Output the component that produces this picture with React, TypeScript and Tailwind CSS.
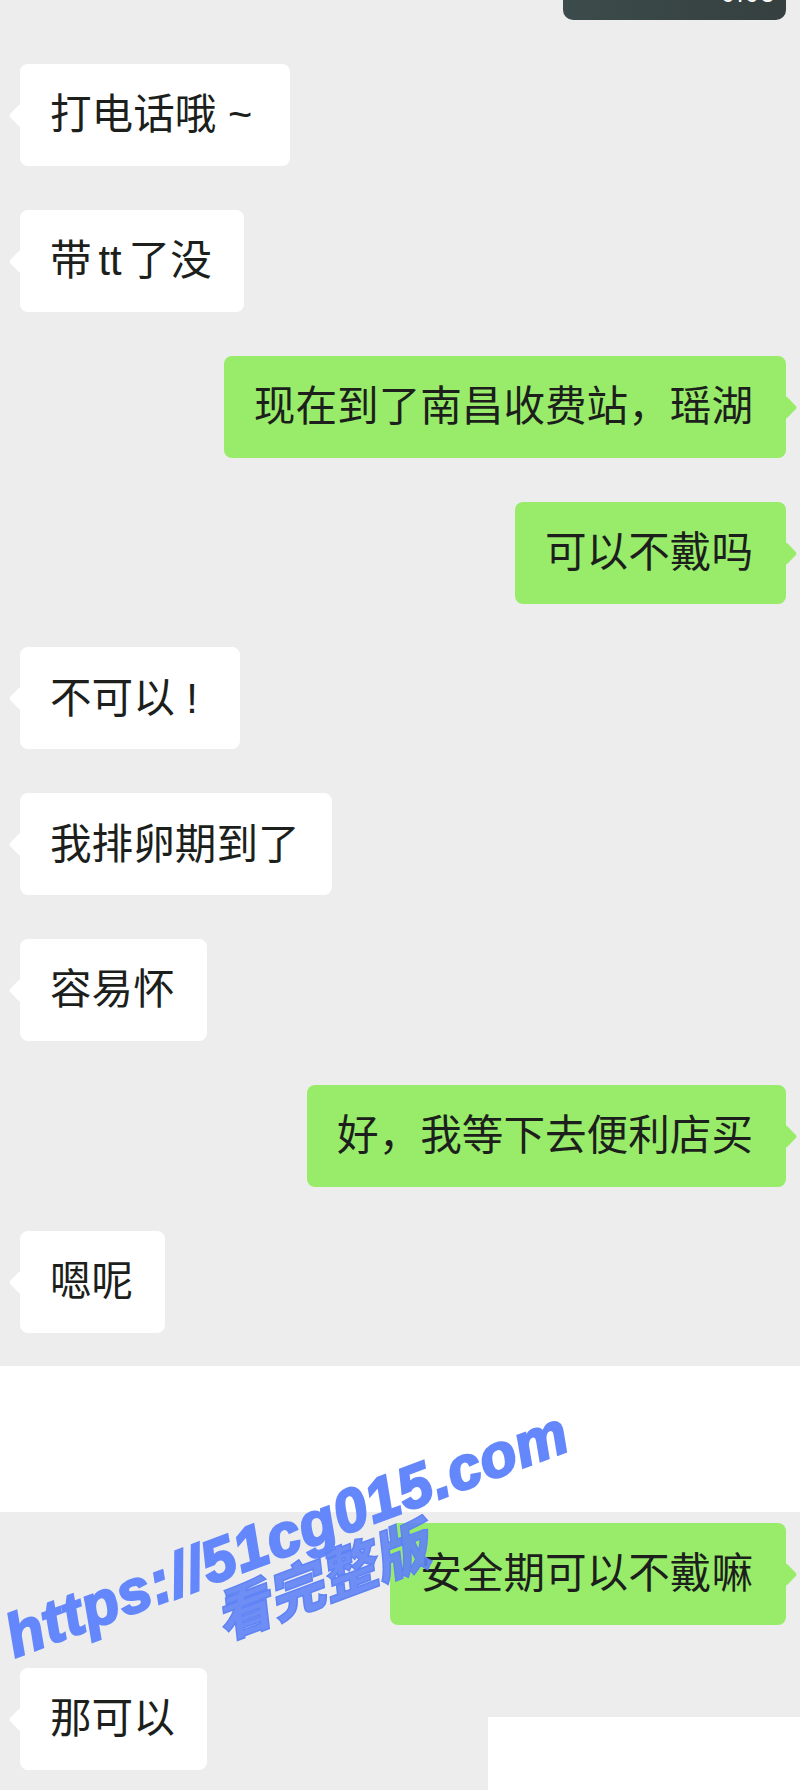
import React from "react";

const fontStack = "font-['Liberation_Sans','Noto_Sans_CJK_SC',sans-serif]";

type BubbleProp = {
  text: string;
  mine?: boolean;
  widthClass?: string;
};

const Bubble = ({ text, mine, widthClass = "" }: BubbleProp) => {
  return (
    <div className={mine ? "flex justify-end pr-[14px]" : "flex justify-start pl-[20px]"}>
      <div
        className={
          mine
            ? `relative flex h-[102px] items-center rounded-lg bg-[#98ec6a] pl-[30px] pr-[33px] ${widthClass}`
            : `relative flex h-[102px] items-center rounded-lg bg-white pl-[30px] pr-[32px] ${widthClass}`
        }
      >
        <span
          className={
            mine
              ? "absolute right-[-8px] top-[43px] h-[17px] w-[17px] rotate-45 rounded-[3px] bg-[#98ec6a]"
              : "absolute left-[-8px] top-[43px] h-[17px] w-[17px] rotate-45 rounded-[3px] bg-white"
          }
        />
        <span className="relative whitespace-nowrap text-[41.6px] leading-none text-[#1c1f1c]">{text}</span>
      </div>
    </div>
  );
};

const App = () => {
  return (
    <div className={`relative h-[1790px] w-[800px] overflow-hidden bg-[#ededed] ${fontStack}`}>
      {/* top part of the chat */}
      <div className="flex h-[1366px] flex-col gap-[43.9px]">
        <div className="flex justify-end pr-[14px]">
          <div className="flex h-[20px] w-[223px] items-end justify-end overflow-hidden rounded-b-[10px] bg-gradient-to-r from-[#3c4b4b] to-[#35403f] pr-[10px]">
            <span className="mb-[14px] text-[24px] leading-none tracking-[2px] text-white">0:03</span>
          </div>
        </div>
        <Bubble text="打电话哦 ~" widthClass="w-[270px]" />
        <Bubble text="带&#8198;tt&#8198;了没" widthClass="w-[224px]" />
        <Bubble text="现在到了南昌收费站，瑶湖" mine />
        <Bubble text="可以不戴吗" mine />
        <Bubble text="不可以 !" widthClass="w-[220px]" />
        <Bubble text="我排卵期到了" />
        <Bubble text="容易怀" />
        <Bubble text="好，我等下去便利店买" mine />
        <Bubble text="嗯呢" />
      </div>

      <div className="h-[146px] bg-white" />

      {/* second screenshot, stitched under the gap */}
      <div className="flex flex-col gap-[43px] pt-[11px]">
        <Bubble text="安全期可以不戴嘛" mine />
        <Bubble text="那可以" />
      </div>

      {/* patch covering the corner */}
      <div className="absolute bottom-0 right-0 h-[73px] w-[312px] bg-white" />

      {/* watermark */}
      <div className="absolute left-[8px] top-[1609px] origin-left -rotate-[20.5deg] whitespace-nowrap text-[60px] font-bold italic leading-none tracking-[1px] text-[#6487fb] [-webkit-text-stroke:2.5px_#6487fb]">
        https://51cg015.com
      </div>
      <div className="absolute left-[217px] top-[1594px] origin-left -rotate-[20.5deg] whitespace-nowrap text-[56px] font-black italic leading-none text-[#5f83f5]/90 [-webkit-text-stroke:1.5px_#5f83f5]">
        看完整版
      </div>
    </div>
  );
};

export default App;
